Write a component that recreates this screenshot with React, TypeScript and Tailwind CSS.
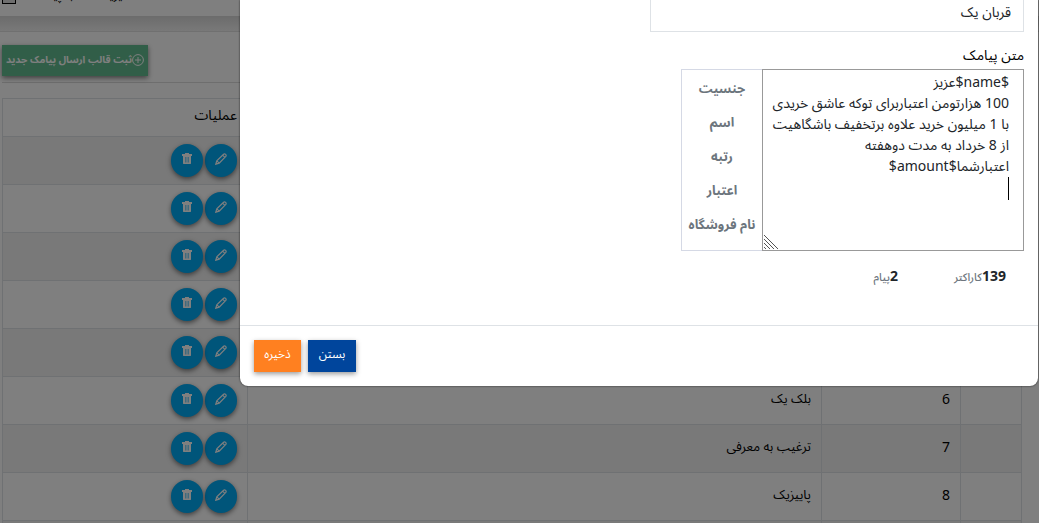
import { type ReactNode } from "react";

const templates = [
  { id: 1, name: "قربان یک" },
  { id: 2, name: "قربان دو" },
  { id: 3, name: "تولد" },
  { id: 4, name: "خوش آمد" },
  { id: 5, name: "بلک دو" },
  { id: 6, name: "بلک یک" },
  { id: 7, name: "ترغیب به معرفی" },
  { id: 8, name: "پاییزیک" },
];

const tokens = ["جنسیت", "اسم", "رتبه", "اعتبار", "نام فروشگاه"];

const message = [
  "$name$عزیز",
  "100 هزارتومن اعتباربرای توکه عاشق خریدی",
  "با 1 میلیون خرید علاوه برتخفیف باشگاهیت",
  "از 8 خرداد به مدت دوهفته",
  "اعتبارشما$amount$",
  "",
].join("\n");

function TrashIcon() {
  return (
    <svg viewBox="0 0 12 12" className="h-3 w-3" fill="currentColor" aria-hidden="true">
      <path d="M4 0h4v1h3v2H1V1h3zM2 3h8v7.5L9.500 11h-7L2 10.500z" />
      <path d="M4.500 4v5.500M6 4v5.500M7.500 4v5.500" stroke="#00aaf5" strokeWidth=".5" />
    </svg>
  );
}

function PencilIcon() {
  return (
    <svg
      viewBox="0 0 12 12"
      className="h-3 w-3"
      fill="none"
      stroke="currentColor"
      strokeWidth="1.2"
      aria-hidden="true"
    >
      <path d="M.8 11.200l1-3.400 6.800-6.600q1-.8 2 .2t.2 2L4.200 10.200zM7.700 2.200l2.100 2.100M1.800 7.800l2.400 2.400" />
    </svg>
  );
}

function CirclePlusIcon() {
  return (
    <svg viewBox="0 0 12 12" className="h-3 w-3 shrink-0" fill="none" stroke="currentColor" aria-hidden="true">
      <circle cx="6" cy="6" r="5.400" />
      <path d="M6 3v6M3 6h6" />
    </svg>
  );
}

function ResizeGrip() {
  return (
    <svg
      viewBox="0 0 14 14"
      className="pointer-events-none absolute bottom-0.5 left-0.5 h-3.5 w-3.5"
      stroke="#555"
      fill="none"
      aria-hidden="true"
    >
      <path d="M0 0l14 14M0 4l10 10M0 8l6 6M0 12l2 2" />
    </svg>
  );
}

function RoundButton({ label, children }: { label: string; children: ReactNode }) {
  return (
    <button
      type="button"
      aria-label={label}
      className="flex h-[33px] w-8 items-center justify-center rounded-full bg-[#00aaf5] pb-1 text-white shadow-[0_2px_5px_rgba(0,0,0,0.5)]"
    >
      {children}
    </button>
  );
}

function TemplatesPage() {
  return (
    <div>
      <header className="h-4 overflow-hidden">
        <div dir="ltr" className="-mt-4 flex items-end gap-3.5 pl-0.5">
          <span className="h-4 w-3.5 border border-black bg-[#ddd]" />
          <h1 className="text-[13px] leading-5">مدیریت قالب پیامک</h1>
        </div>
      </header>
      <div className="h-4 border-b border-[#e0e0e0] bg-linear-to-b from-[#d8d8d8] to-[#f2f2f2]" />
      <main className="pr-[17px] pl-0.5 pt-[13px]">
        <div className="flex justify-end border-b border-[#dcdcdc] pb-1.5">
          <button
            type="button"
            className="flex h-[31px] items-center bg-[#62bd91] px-1 pb-0.5 text-[10px] font-bold whitespace-nowrap text-white shadow-[0_2px_5px_rgba(0,0,0,0.5)]"
          >
            <CirclePlusIcon />
            ثبت قالب ارسال پیامک جدید
          </button>
        </div>
        <table className="mt-[15px] w-full table-fixed border-collapse text-sm">
          <thead>
            <tr className="h-[38px] align-top">
              <th className="w-[61px] border border-[#dee2e6]" />
              <th className="w-[139px] border border-[#dee2e6] px-2.5 pt-1.5 text-right font-normal">ردیف</th>
              <th className="border border-[#dee2e6] px-2.5 pt-1.5 text-right font-normal">عنوان</th>
              <th className="w-[245px] border border-[#dee2e6] px-2.5 pt-1.5 text-right font-normal">عملیات</th>
            </tr>
          </thead>
          <tbody>
            {templates.map((item) => (
              <tr key={item.id} className="h-12 odd:bg-[#f2f2f2]">
                <td className="border border-[#dee2e6]" />
                <td className="border border-[#dee2e6] px-2.5 pb-1">{item.id}</td>
                <td className="border border-[#dee2e6] px-2.5 pb-1 text-[13px]">{item.name}</td>
                <td className="border border-[#dee2e6] px-2.5">
                  <div className="flex gap-0.5">
                    <RoundButton label="ویرایش">
                      <PencilIcon />
                    </RoundButton>
                    <RoundButton label="حذف">
                      <TrashIcon />
                    </RoundButton>
                  </div>
                </td>
              </tr>
            ))}
          </tbody>
          <tfoot>
            <tr className="h-12 bg-[#f2f2f2]">
              <td className="border border-[#dee2e6]" />
              <td className="border border-[#dee2e6]" />
              <td className="border border-[#dee2e6]" />
              <td className="border border-[#dee2e6]" />
            </tr>
          </tfoot>
        </table>
      </main>
    </div>
  );
}

function TemplateModal() {
  return (
    <div
      role="dialog"
      aria-modal="true"
      aria-label="ثبت قالب"
      className="absolute top-0 right-px left-60 overflow-hidden rounded-b-lg bg-white shadow-[0_0_2px_rgba(0,0,0,0.8)]"
    >
      <div className="px-3.5">
        <input
          aria-label="عنوان"
          defaultValue="قربان یک"
          className="-mt-1.5 block h-[38px] w-[374px] border border-[#dee2e6] px-3 pb-0.5 text-sm text-[#212529] outline-none"
        />
        <label htmlFor="message" className="mt-[11px] block text-sm leading-6 text-black">
          متن پیامک
        </label>
        <div className="mt-0.5 flex h-[182px]">
          <div className="relative w-[262px]">
            <textarea
              id="message"
              defaultValue={message}
              className="block h-full w-full resize-none border border-[#999] py-px pr-3.5 pl-1 text-sm leading-[21px] text-[#212529] outline-none"
            />
            <span className="pointer-events-none absolute top-[108px] right-[15px] h-[23px] w-px bg-black" />
            <ResizeGrip />
          </div>
          <div className="flex w-[81px] flex-col items-center border border-r-0 border-[#d5d9e5] pt-0.5 text-[13px] font-bold text-[#6c757d]">
            {tokens.map((token) => (
              <button key={token} type="button" className="h-[34px] whitespace-nowrap">
                {token}
              </button>
            ))}
          </div>
        </div>
        <div className="mt-3.5 flex gap-14 pr-[18px] text-[11px] leading-6 font-medium text-[#6c757d]">
          <span>
            <b className="text-sm text-[#212529]">139</b>کاراکتر
          </span>
          <span>
            <b className="text-sm text-[#212529]">2</b>پیام
          </span>
        </div>
      </div>
      <div className="mt-9 flex justify-end gap-[7px] border-t border-[#dee2e6] p-3.5 text-xs text-white">
        <button type="button" className="h-8 w-12 bg-[#00459c] pb-1 shadow-[0_2px_5px_rgba(0,0,0,0.4)]">
          بستن
        </button>
        <button type="button" className="h-8 w-[47px] bg-[#ff8020] pb-1 shadow-[0_2px_5px_rgba(0,0,0,0.4)]">
          ذخیره
        </button>
      </div>
    </div>
  );
}

export default function App() {
  return (
    <div
      dir="rtl"
      className="relative h-screen overflow-hidden bg-white font-['Noto_Sans','Noto_Sans_Arabic','DejaVu_Sans',sans-serif] text-black"
    >
      <TemplatesPage />
      <div className="absolute inset-0 bg-black/50" />
      <TemplateModal />
    </div>
  );
}
